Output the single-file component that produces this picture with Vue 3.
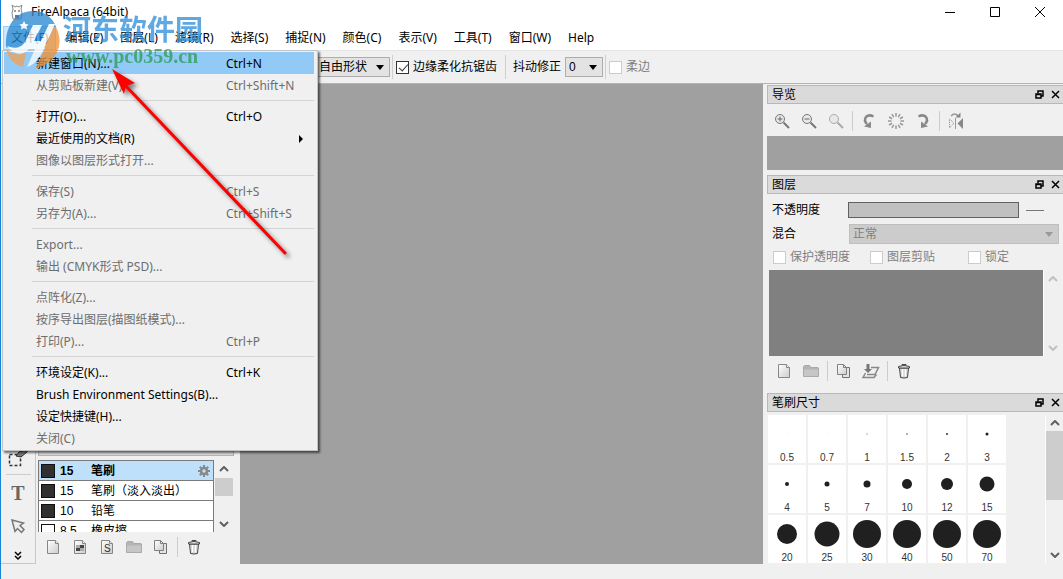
<script setup>
import { ref } from 'vue'

const menus = ['文件(F)', '编辑(E)', '图层(L)', '滤镜(R)', '选择(S)', '捕捉(N)', '颜色(C)', '表示(V)', '工具(T)', '窗口(W)', 'Help']

const fileMenu = [
  [
    { label: '新建窗口(N)...', key: 'Ctrl+N', on: true, active: true },
    { label: '从剪贴板新建(V)', key: 'Ctrl+Shift+N' },
  ],
  [
    { label: '打开(O)...', key: 'Ctrl+O', on: true },
    { label: '最近使用的文档(R)', on: true, sub: true },
    { label: '图像以图层形式打开...' },
  ],
  [
    { label: '保存(S)', key: 'Ctrl+S' },
    { label: '另存为(A)...', key: 'Ctrl+Shift+S' },
  ],
  [{ label: 'Export...' }, { label: '输出 (CMYK形式 PSD)...' }],
  [
    { label: '点阵化(Z)...' },
    { label: '按序导出图层(描图纸模式)...' },
    { label: '打印(P)...', key: 'Ctrl+P' },
  ],
  [
    { label: '环境设定(K)...', key: 'Ctrl+K', on: true },
    { label: 'Brush Environment Settings(B)...', on: true },
    { label: '设定快捷键(H)...', on: true },
    { label: '关闭(C)' },
  ],
]

const brushes = [
  { size: '15', name: '笔刷', active: true },
  { size: '15', name: '笔刷（淡入淡出）' },
  { size: '10', name: '铅笔' },
  { size: '8.5', name: '橡皮擦', light: true },
]

const sizes = [
  ['0.5', 0.5, '#ddd'], ['0.7', 0.5, '#ddd'], ['1', 1, '#ccc'], ['1.5', 1, '#999'], ['2', 1, '#333'], ['3', 1.5, '#202020'],
  ['4', 2, '#202020'], ['5', 2.5, '#202020'], ['7', 3.5, '#202020'], ['10', 5, '#202020'], ['12', 6, '#202020'], ['15', 7.5, '#202020'],
  ['20', 10, '#202020'], ['25', 12.5, '#202020'], ['30', 14, '#202020'], ['40', 14, '#202020'], ['50', 14, '#202020'], ['70', 14, '#202020'],
]

const antialias = ref(true)
const rays = Array.from({ length: 12 }, (_, i) => i * 30)
const teeth = Array.from({ length: 8 }, (_, i) => i * 45)
</script>

<template>
  <div class="window">
    <svg class="defs" width="0" height="0" aria-hidden="true">
      <defs>
        <linearGradient id="paper" x1="0" y1="0" x2="1" y2="1">
          <stop offset="0" stop-color="#fff" /><stop offset="1" stop-color="#ccc" />
        </linearGradient>
        <symbol id="i-page" viewBox="0 0 20 20">
          <path d="M4.500 3.500h8l3 3v10h-11z" fill="url(#paper)" stroke="#868686" />
          <path d="M12.500 3.500v3h3" fill="#eee" stroke="#868686" />
        </symbol>
        <symbol id="i-folder" viewBox="0 0 20 20">
          <path d="M2.500 15.500v-10l1-1h5l1.500 2h7l.5.5v8.500z" fill="#b4b4b4" stroke="#aaa" />
          <path d="M3 8.500h14v6.500h-14z" fill="#c6c6c6" />
        </symbol>
        <symbol id="i-copy" viewBox="0 0 20 20">
          <path d="M8.500 6.500h7v10h-7z" fill="#e4e4e4" stroke="#707070" />
          <path d="M3.500 3.500h6l3 3v7h-9z" fill="url(#paper)" stroke="#808080" />
          <path d="M9.500 3.500v3h3" fill="none" stroke="#808080" />
        </symbol>
        <symbol id="i-merge" viewBox="0 0 20 20">
          <path d="M10 6.500h7.500l-3.500 7h-8M4.500 12l-2.500 4.500h11l2.500-3" fill="none" stroke="#888" stroke-width="1.500" />
          <path d="M5.500 3h3v5h2.500l-4 4-4-4h2.500z" fill="#777" />
        </symbol>
        <symbol id="i-trash" viewBox="0 0 20 20">
          <path d="M5.500 7l1 9.500q3.500 1 7 0l1-9.500z" fill="#ddd" stroke="#444" />
          <path d="M8.500 8v7M11.500 8v7" stroke="#fff" />
          <path d="M4.500 5.500q5.500-2 11 0v1.500h-11z" fill="#eee" stroke="#444" />
          <path d="M8 4.500v-1h4v1" fill="none" stroke="#444" />
        </symbol>
        <symbol id="i-rotate" viewBox="0 0 20 20">
          <path d="M14.500 5.500Q10 3 7 6Q4.500 9.500 8 13" fill="none" stroke="#888" stroke-width="2.500" />
          <path d="M5 15.500l7-5v6.500z" fill="#888" />
        </symbol>
        <symbol id="i-zoom" viewBox="0 0 20 20">
          <path d="M11.500 11.500l5.500 5.500" stroke="currentColor" stroke-width="2" />
          <circle cx="8" cy="8" r="4.500" fill="#e8e8e8" stroke="currentColor" />
        </symbol>
      </defs>
    </svg>

    <header class="titlebar">
      <svg class="app-icon" width="14" height="16" viewBox="0 0 14 16">
        <path d="M3 5L2 1l3 2 2-1 2 1 3-2-1 4 1 4-1 6H3L2 9z" fill="#fff" stroke="#888" />
        <path d="M4 7h2M8 7h2" stroke="#444" /><path d="M5 11h4v3h-4z" fill="#a8655a" />
      </svg>
      <h1>FireAlpaca (64bit)</h1>
      <div class="window-buttons">
        <button aria-label="Minimize"><svg width="11" height="11"><path d="M0 5.500h10" /></svg></button>
        <button aria-label="Maximize"><svg width="11" height="11"><path d="M.5.5h9v9h-9z" /></svg></button>
        <button aria-label="Close"><svg width="11" height="11"><path d="M0 0l10 10M10 0l-10 10" /></svg></button>
      </div>
    </header>

    <nav class="menubar">
      <button v-for="(m, i) in menus" :key="m" :class="{ open: i === 0 }">{{ m }}</button>
    </nav>

    <div class="toolbar">
      <span class="combo shape"><select aria-label="形状"><option>自由形状</option></select></span>
      <i class="rule"></i>
      <label class="check"><input v-model="antialias" type="checkbox">边缘柔化抗锯齿</label>
      <i class="rule after-check"></i>
      <label class="field">抖动修正<span class="combo jitter"><select><option>0</option></select></span></label>
      <i class="rule tight"></i>
      <label class="check off"><input type="checkbox" disabled>柔边</label>
    </div>

    <main class="body">
      <aside class="tools">
        <button aria-label="Select pen">
          <svg width="22" height="22" viewBox="0 0 22 22">
            <path d="M2.500 7.500h11v11h-11z" fill="none" stroke="#333" stroke-width="1.500" stroke-dasharray="3 2" />
            <path d="M9 9l3-4 8-3v3l-6 5z" fill="#777" stroke="#333" />
          </svg>
        </button>
        <i></i>
        <button class="type-tool" aria-label="Text">T</button>
        <button aria-label="Operation">
          <svg width="20" height="20" viewBox="0 0 20 20"><path d="M4 4l11.500 3-3.500 2.500 4 4-2.500 3-4-4-2.500 3z" fill="#eee" stroke="#777" stroke-width="1.500" /></svg>
        </button>
        <button class="more" aria-label="More">
          <svg width="8" height="10" viewBox="0 0 8 10"><path d="M1 1l3 3 3-3M1 5l3 3 3-3" fill="none" stroke="#000" stroke-width="1.500" /></svg>
        </button>
      </aside>

      <section class="brush-panel">
        <h2 class="brush-title">笔刷</h2>
        <div class="brush-body">
          <div class="brush-list">
            <button v-for="b in brushes" :key="b.name" class="brush" :class="{ active: b.active }">
              <i :class="{ light: b.light }"></i><span>{{ b.size }}</span><b>{{ b.name }}</b>
              <svg v-if="b.active" width="14" height="14" viewBox="-7 -7 14 14">
                <path v-for="a in teeth" :key="a" d="M0-3v-3" stroke="#888" stroke-width="2" :transform="`rotate(${a})`" />
                <circle r="3" fill="none" stroke="#888" stroke-width="2.500" />
              </svg>
            </button>
          </div>
          <div class="scroll brush-scroll">
            <svg width="10" height="6"><path d="M1 5l4-4 4 4" /></svg>
            <i></i>
            <svg width="10" height="6"><path d="M1 1l4 4 4-4" /></svg>
          </div>
        </div>
        <div class="icons">
          <button aria-label="New brush"><svg><use href="#i-page" /></svg></button>
          <button aria-label="New bitmap brush">
            <svg viewBox="0 0 20 20"><use href="#i-page" /><path d="M6 8h4v3h-4zM10 11h4v3h-4z" fill="#aaa" /><path d="M10 8h4v3h-4zM6 11h4v3h-4z" fill="#444" /></svg>
          </button>
          <button aria-label="New script brush"><svg viewBox="0 0 20 20"><use href="#i-page" /><text x="7" y="15">S</text></svg></button>
          <button aria-label="Folder"><svg><use href="#i-folder" /></svg></button>
          <button aria-label="Duplicate"><svg><use href="#i-copy" /></svg></button>
          <i></i>
          <button aria-label="Delete"><svg><use href="#i-trash" /></svg></button>
        </div>
      </section>

      <section class="canvas"></section>

      <aside class="docks">
        <section class="dock">
          <h2>导览
            <button aria-label="Float"><svg width="9" height="9"><path d="M3 3.500V1h5v5h-2M3 1h5" /><path d="M1 4h5v4h-5zM1 4.500h5" /></svg></button>
            <button aria-label="Close"><svg width="9" height="9"><path d="M1 1l7 7M8 1l-7 7" /></svg></button>
          </h2>
          <div class="icons nav-icons">
            <button aria-label="Zoom in" class="dark"><svg viewBox="0 0 20 20"><use href="#i-zoom" /><path d="M5.500 8h5M8 5.500v5" stroke="#666" /></svg></button>
            <button aria-label="Zoom out" class="dark"><svg viewBox="0 0 20 20"><use href="#i-zoom" /><path d="M5.500 8h5" stroke="#666" /></svg></button>
            <button aria-label="Fit" class="pale"><svg><use href="#i-zoom" /></svg></button>
            <i></i>
            <button aria-label="Rotate left"><svg><use href="#i-rotate" /></svg></button>
            <button aria-label="Reset rotation">
              <svg viewBox="-10 -10 20 20"><path v-for="a in rays" :key="a" d="M0-4.500v-3.500" stroke="#999" stroke-width="1.500" :transform="`rotate(${a})`" /></svg>
            </button>
            <button aria-label="Rotate right" class="mirror"><svg><use href="#i-rotate" /></svg></button>
            <i></i>
            <button aria-label="Flip">
              <svg viewBox="0 0 20 20">
                <path d="M5 5q4-4 7 0" fill="none" stroke="#999" stroke-width="1.500" /><path d="M9.500 6.500h5v-5z" fill="#888" />
                <path d="M9.500 7v11" stroke="#999" /><path d="M3.500 8l4.500 4-4.500 5z" fill="none" stroke="#888" stroke-dasharray="1 1" />
                <path d="M17 7v11l-5.500-5.500z" fill="#888" />
              </svg>
            </button>
          </div>
          <div class="preview"></div>
        </section>

        <section class="dock">
          <h2>图层
            <button aria-label="Float"><svg width="9" height="9"><path d="M3 3.500V1h5v5h-2M3 1h5" /><path d="M1 4h5v4h-5zM1 4.500h5" /></svg></button>
            <button aria-label="Close"><svg width="9" height="9"><path d="M1 1l7 7M8 1l-7 7" /></svg></button>
          </h2>
          <div class="layer-form">
            <label for="opacity">不透明度</label>
            <div class="opacity"><input id="opacity" type="range" value="0" disabled><i></i></div>
            <label for="blend">混合</label>
            <span class="combo blend"><select id="blend" disabled><option>正常</option></select></span>
          </div>
          <div class="layer-checks">
            <label class="check off"><input type="checkbox" disabled>保护透明度</label>
            <label class="check off"><input type="checkbox" disabled>图层剪贴</label>
            <label class="check off"><input type="checkbox" disabled>锁定</label>
          </div>
          <div class="layer-area">
            <div class="layer-list"></div>
            <div class="scroll faint">
              <svg width="10" height="6"><path d="M1 5l4-4 4 4" /></svg>
              <svg width="10" height="6"><path d="M1 1l4 4 4-4" /></svg>
            </div>
          </div>
          <div class="icons layer-icons">
            <button aria-label="New layer"><svg><use href="#i-page" /></svg></button>
            <button aria-label="New folder"><svg><use href="#i-folder" /></svg></button>
            <i></i>
            <button aria-label="Duplicate layer"><svg><use href="#i-copy" /></svg></button>
            <button aria-label="Merge layer"><svg><use href="#i-merge" /></svg></button>
            <i></i>
            <button aria-label="Delete layer"><svg><use href="#i-trash" /></svg></button>
          </div>
        </section>

        <section class="dock size-dock">
          <h2>笔刷尺寸
            <button aria-label="Float"><svg width="9" height="9"><path d="M3 3.500V1h5v5h-2M3 1h5" /><path d="M1 4h5v4h-5zM1 4.500h5" /></svg></button>
            <button aria-label="Close"><svg width="9" height="9"><path d="M1 1l7 7M8 1l-7 7" /></svg></button>
          </h2>
          <div class="size-area">
            <div class="size-grid">
              <button v-for="s in sizes" :key="s[0]">
                <svg width="38" height="38"><circle cx="19" cy="19" :r="s[1]" :fill="s[2]" /></svg>
                <span>{{ s[0] }}</span>
              </button>
            </div>
            <div class="scroll size-scroll">
              <svg width="10" height="6"><path d="M1 5l4-4 4 4" /></svg>
              <i></i>
              <svg width="10" height="6"><path d="M1 1l4 4 4-4" /></svg>
            </div>
          </div>
        </section>
      </aside>
    </main>
    <footer class="status"></footer>

    <div class="dropdown" role="menu">
      <div v-for="(group, g) in fileMenu" :key="g" class="group">
        <button v-for="it in group" :key="it.label" role="menuitem" :class="{ on: it.on, active: it.active }">
          <span>{{ it.label }}</span><kbd>{{ it.key }}</kbd><i v-if="it.sub"></i>
        </button>
      </div>
    </div>

    <div class="watermark">
      <svg width="60" height="60" viewBox="0 0 60 60">
        <path d="M3 36C2 14 13 0 30 0c12 0 20 7 23 16l-8 2-7 12 3 4-6 3-8-3q-9 8-24 2z" fill="#2386cf" />
        <path d="M53 16q10 21-8 36-6 4-12 4l9-19-5-3 8-16z" fill="#ef8f32" />
        <path d="M3 38q9 8 20 4l-3 14Q6 52 3 38z" fill="#f2a052" />
        <path d="M4 35q12 5 18-4l8-17h9l-8 16h7l8-17h6l-10 22q-7 18-18 21l8-18h-6q-11 11-22-3z" fill="#fff" />
        <path d="M21 10l1.500 3 3 .5-2 2 .5 3-3-1.500-3 1.500.5-3-2-2 3-.5z" fill="#fff" />
      </svg>
      <div><strong>河东软件园</strong><em>www.pc0359.cn</em></div>
    </div>

    <svg class="pointer" width="200" height="210" viewBox="0 0 200 210">
      <path d="M22 23L184 193" stroke="#f00" stroke-width="3" stroke-linecap="round" />
      <path d="M11 9l23 14-9 3-2 8z" fill="#f00" />
    </svg>
  </div>
</template>

<style>
body { background: #f0f0f0; }
</style>

<style scoped>
* { box-sizing: border-box; }
.window {
  position: relative; min-height: 100vh; display: flex; flex-direction: column;
  border-left: 1px solid #1883d7; background: #f0f0f0; color: #000;
  font: 12px/16px "Liberation Sans", "Noto Sans CJK SC", sans-serif;
}
.defs { position: absolute; }
button { padding: 0; border: 0; background: none; color: inherit; font: inherit; }
h1, h2 { margin: 0; font: inherit; }

.titlebar { height: 24px; display: flex; align-items: center; gap: 7px; padding-left: 9px; background: #fff; }
.titlebar h1, .menubar, .dropdown { font-family: "Noto Sans", "Noto Sans CJK SC", sans-serif; }
.window-buttons { margin-left: auto; display: flex; }
.window-buttons button { width: 45px; height: 24px; display: flex; align-items: center; justify-content: center; }
.window-buttons path { fill: none; stroke: #000; }

.menubar { height: 26px; display: flex; align-items: flex-end; gap: 1px; padding: 0 2px; background: #fff; }
.menubar button { height: 24px; padding: 0 8px; white-space: nowrap; }
.menubar .open { background: #cce8ff; box-shadow: inset 0 0 0 1px #99d1ff; }

.toolbar { height: 34px; display: flex; align-items: center; padding-left: 299px; border-top: 1px solid #e4e4e4; border-bottom: 1px solid #b4b4b4; }
.rule { width: 1px; height: 24px; margin: 0 3px 0 2px; background: #d0d0d0; }
.rule.after-check { margin: 0 7px 0 8px; }
.rule.tight { margin: 0 3px 0 2px; }
.combo { position: relative; display: inline-flex; height: 20px; border: 1px solid #adadad; background: #e3e3e3; }
.combo::after { content: ""; position: absolute; right: 5px; top: 7px; border: 4px solid transparent; border-top: 5px solid #000; border-bottom: 0; }
.combo select { width: 100%; padding: 0 0 0 3px; appearance: none; border: 0; background: none; font: inherit; color: inherit; opacity: 1; }
.shape { width: 90px; }
.shape select { padding-left: 18px; }
.jitter { width: 38px; }
.field { display: flex; align-items: center; gap: 4px; }
.check { display: flex; align-items: center; gap: 4px; }
.check input { position: relative; appearance: none; width: 13px; height: 13px; margin: 0; border: 1px solid #333; background: #fff; }
.check input:checked::after { content: ""; position: absolute; left: 4px; top: 0; width: 4px; height: 8px; border: solid #333; border-width: 0 1px 1px 0; transform: rotate(42deg); }
.check.off { color: #808080; }
.check.off input { border-color: #ccc; }

.body { flex: 1; display: flex; }
.tools { width: 35px; display: flex; flex-direction: column; align-items: center; justify-content: flex-end; border: solid #c8c8c8; border-width: 0 1px 1px 0; }
.tools button { display: flex; height: 30px; align-items: center; }
.tools > i { width: 25px; height: 1px; margin-top: 1px; background: #ccc; }
.tools .type-tool { height: 36px; font: 700 20px "Liberation Serif", serif; color: #666; }
.tools .more { height: 14px; margin-top: 8px; }

.brush-panel { width: 204px; padding: 0 6px 2px 2px; display: flex; flex-direction: column; justify-content: flex-end; }
.brush-title { height: 19px; padding-left: 6px; background: #dadada; border: 1px solid #b4b4b4; }
.brush-body { display: flex; height: 72px; margin-top: 4px; }
.brush-list { width: 176px; overflow: hidden; background: #fff; border: solid #7a7a7a; border-width: 1px 1px 0; }
.brush { position: relative; width: 100%; height: 20px; display: grid; grid-template-columns: 19px 31px 1fr 16px; align-items: center; padding-left: 2px; text-align: left; border-bottom: 1px solid #7a7a7a; }
.brush > i { width: 14px; height: 14px; background: #303030; border: 1px solid #111; }
.brush > i.light { background: #fff; }
.brush b { white-space: nowrap; font-weight: 400; }
.brush.active { background: #bfe0fa; font-weight: 700; }
.brush.active b { font-weight: 700; }
.icons { display: flex; align-items: center; height: 30px; gap: 7px; color: #777; }
.icons button { width: 20px; height: 20px; }
.icons button svg { display: block; width: 20px; height: 20px; }
.icons i { width: 1px; height: 20px; margin: 0 -1px; background: #ccc; }
.icons text { font-size: 10px; fill: #333; }
.brush-panel .icons { padding-left: 5px; }
.icons .pale { color: #aaa; }
.icons .mirror { transform: scaleX(-1); }

.scroll { width: 18px; display: flex; flex-direction: column; align-items: center; justify-content: space-between; }
.scroll path { fill: none; stroke: #606060; stroke-width: 2; }
.scroll i { width: 100%; background: #cdcdcd; }
.brush-scroll { padding: 6px 0 5px; margin-left: 1px; }
.brush-scroll i { height: 18px; margin-bottom: 19px; }
.faint path { stroke: #c0c0c0; }

.canvas { flex: 1; background: #a0a0a0; }

.docks { width: 300px; padding: 1px 0 0 4px; }
.dock h2 { height: 19px; display: flex; align-items: center; gap: 7px; padding: 0 3px 0 4px; border: 1px solid #b8b8b8; border-right: 0; background: #dadada; }
.dock h2 button { display: flex; }
.dock h2 button:first-of-type { margin-left: auto; }
.dock h2 path { fill: none; stroke: #000; stroke-width: 1.500; }
.nav-icons { height: 32px; padding: 2px 5px 0; }
.preview { height: 34px; margin-bottom: 5px; background: #a0a0a0; }
.layer-form { display: grid; grid-template-columns: 77px 1fr; row-gap: 4px; align-items: center; padding: 6px 4px 0 5px; }
.opacity { height: 20px; display: flex; align-items: center; }
.opacity input { appearance: none; flex: 1; height: 16px; margin: 0 7px 0 -1px; border: 1px solid #606060; background: #c0c0c0; }
.opacity input::-webkit-slider-thumb { appearance: none; width: 0; }
.opacity i { width: 18px; height: 1px; margin-right: 15px; background: #777; }
.blend { border-color: #bfbfbf; background: #ccc; color: #808080; }
.blend::after { border-top-color: #999; }
.layer-checks { display: grid; grid-template-columns: 97px 98px 1fr; padding: 5px 6px; }
.layer-area { display: flex; height: 86px; padding: 0 2px; }
.layer-list { flex: 1; background: #808080; }
.faint { padding: 6px 0 5px; border-left: 1px solid #fff; }
.layer-icons { padding: 0 7px; }
.layer-icons i { margin: 0 -1px; }
.size-dock { margin-top: 7px; }
.size-area { display: flex; justify-content: space-between; height: 151px; padding-top: 3px; }
.size-grid { display: grid; grid-template-columns: repeat(6, 38px); grid-auto-rows: 48px; gap: 2px; padding-left: 1px; }
.size-grid button { display: flex; flex-direction: column; align-items: center; background: #fff; font: 10px/10px "Liberation Sans", sans-serif; color: #333; }
.size-grid svg { display: block; flex: none; }
.size-scroll { padding: 5px 0; border-left: 1px solid #fff; }
.size-scroll i { height: 69px; margin-bottom: 48px; }
.status { height: 15px; }

.dropdown {
  position: absolute; left: 1px; top: 50px; width: 316px; padding: 1px 3px 1px 1px;
  border: 1px solid #c4c4c4; background: #f0f0f0; box-shadow: 2px 2px 2px rgba(0, 0, 0, 0.55);
}
.group + .group::before { content: ""; display: block; height: 1px; margin: 4px 0 4px 28px; background: #d4d4d4; }
.dropdown button { width: 100%; height: 22px; display: grid; grid-template-columns: 190px 1fr 15px; align-items: center; padding: 2px 0 0 32px; text-align: left; white-space: nowrap; color: #6d6d6d; }
.dropdown button.on { color: #000; }
.dropdown button.active { background: #91c9f7; }
.dropdown kbd { font: inherit; }
.dropdown i { border: 4px solid transparent; border-left: 4px solid #000; border-right: 0; justify-self: start; }

.watermark { position: absolute; left: 2px; top: 11px; display: flex; pointer-events: none; opacity: 0.75; }
.watermark div { display: flex; flex-direction: column; white-space: nowrap; }
.watermark strong { font: 700 28px/35px "Noto Sans CJK SC", sans-serif; color: #2a8cd8; }
.watermark em { padding-left: 3px; font: 700 20px/21px "Liberation Serif", serif; color: #2a9c50; }
.pointer { position: absolute; left: 100px; top: 60px; pointer-events: none; filter: drop-shadow(3px 3px 2px rgba(0, 0, 0, 0.5)); }
</style>
